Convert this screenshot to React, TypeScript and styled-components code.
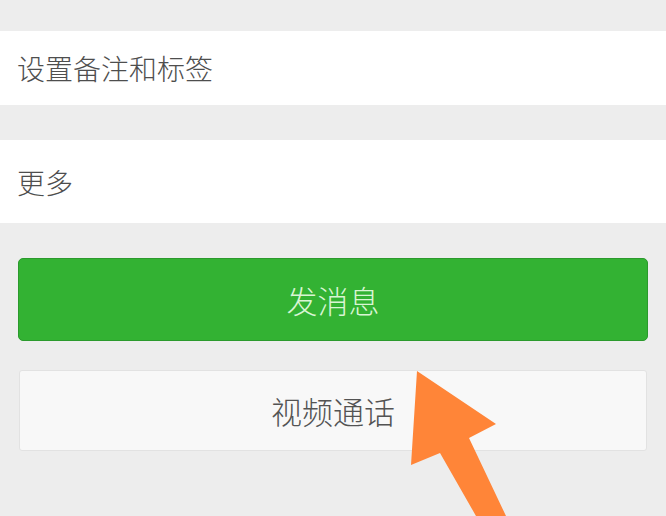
import React from "react";
import styled, { createGlobalStyle } from "styled-components";

const Global = createGlobalStyle`
  html, body { margin: 0; padding: 0; background: #ededed; }
  body { font-family: "Noto Sans CJK SC", "Noto Sans", sans-serif; }
  #root { width: 666px; height: 516px; overflow: hidden; }
`;

const Page = styled.div`
  position: relative;
  width: 666px;
  height: 516px;
  background: #ededed;
  padding-top: 31px;
  box-sizing: border-box;
  display: flex;
  flex-direction: column;
  overflow: hidden;
`;

const Row = styled.div<{ $h: number; $mt?: number }>`
  height: ${(p) => p.$h}px;
  margin-top: ${(p) => p.$mt ?? 0}px;
  background: #ffffff;
  display: flex;
  align-items: center;
  padding-left: 17px;
  font-size: 28px;
  font-weight: 300;
  color: #4e4e4e;
  line-height: 1;
`;

const Actions = styled.div`
  display: flex;
  flex-direction: column;
  gap: 29px;
  padding: 35px 18px 0 18px;
`;

const Button = styled.div<{ $primary?: boolean }>`
  height: ${(p) => (p.$primary ? 83 : 81)}px;
  margin: ${(p) => (p.$primary ? "0" : "0 1px")};
  box-sizing: border-box;
  border-radius: ${(p) => (p.$primary ? 5 : 3)}px;
  background: ${(p) => (p.$primary ? "#33b233" : "#f8f8f8")};
  border: 1px solid ${(p) => (p.$primary ? "#2b9a2d" : "#e2e2e2")};
  color: ${(p) => (p.$primary ? "#d9f5d3" : "#535353")};
  display: flex;
  align-items: center;
  justify-content: center;
  font-size: 31px;
  font-weight: 300;
  line-height: 1;
`;

const Arrow = styled.svg`
  position: absolute;
  left: 0;
  top: 0;
  width: 666px;
  height: 516px;
  pointer-events: none;
`;

export default function App() {
  return (
    <>
      <Global />
      <Page>
        <Row $h={74}>设置备注和标签</Row>
        <Row $h={83} $mt={35}>更多</Row>
        <Actions>
          <Button $primary>发消息</Button>
          <Button>视频通话</Button>
        </Actions>
        <Arrow viewBox="0 0 666 516">
          <polygon
            points="417,371 496,424 469,438 506,516 476,516 440,453 411,465"
            fill="#ff8538"
          />
        </Arrow>
      </Page>
    </>
  );
}
